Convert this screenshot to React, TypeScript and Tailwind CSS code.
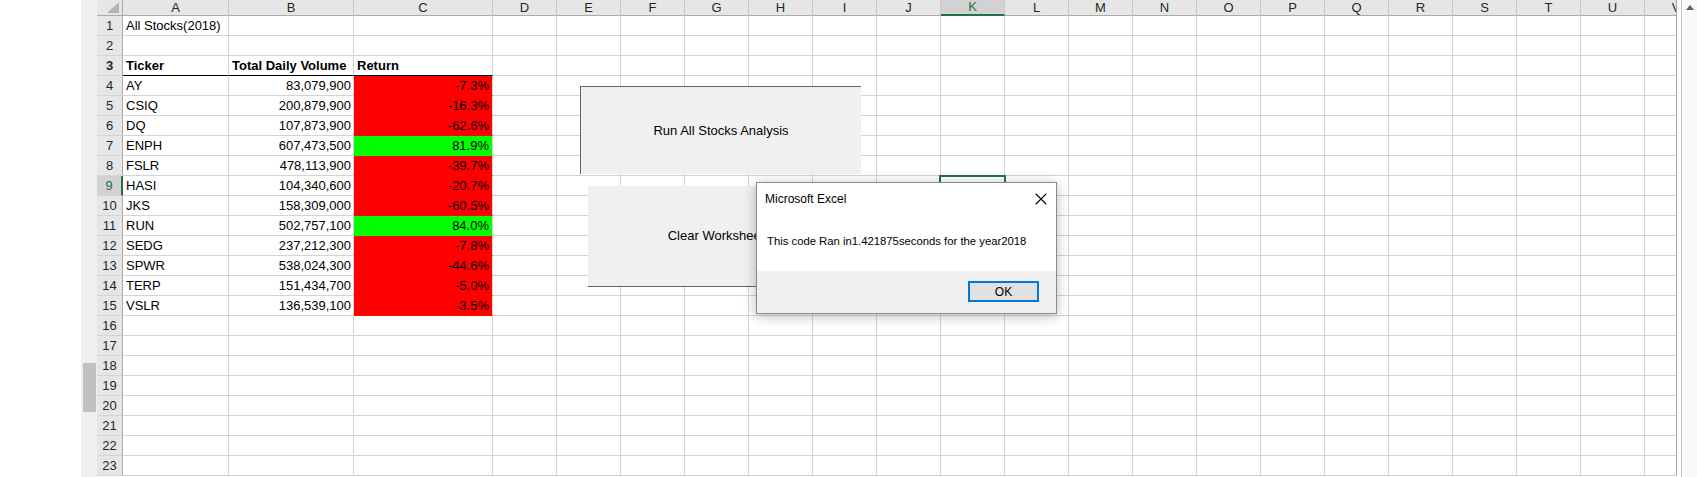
import { X } from 'lucide-react';

const letters = ['D', 'E', 'F', 'G', 'H', 'I', 'J', 'K', 'L', 'M', 'N', 'O', 'P', 'Q', 'R', 'S', 'T', 'U'];

const stocks = [
  { ticker: 'AY', volume: '83,079,900', ret: '-7.3%' },
  { ticker: 'CSIQ', volume: '200,879,900', ret: '-16.3%' },
  { ticker: 'DQ', volume: '107,873,900', ret: '-62.6%' },
  { ticker: 'ENPH', volume: '607,473,500', ret: '81.9%' },
  { ticker: 'FSLR', volume: '478,113,900', ret: '-39.7%' },
  { ticker: 'HASI', volume: '104,340,600', ret: '-20.7%' },
  { ticker: 'JKS', volume: '158,309,000', ret: '-60.5%' },
  { ticker: 'RUN', volume: '502,757,100', ret: '84.0%' },
  { ticker: 'SEDG', volume: '237,212,300', ret: '-7.8%' },
  { ticker: 'SPWR', volume: '538,024,300', ret: '-44.6%' },
  { ticker: 'TERP', volume: '151,434,700', ret: '-5.0%' },
  { ticker: 'VSLR', volume: '136,539,100', ret: '-3.5%' },
];

const cell = 'h-full shrink-0 border-r border-b border-[#d4d4d4] flex items-end whitespace-nowrap overflow-hidden';

function RowHeader({ n }: { n: number }) {
  const selected = n === 9;
  return (
    <div
      className={`w-[26px] h-full shrink-0 border-b border-[#d4d4d4] flex items-center justify-center ${
        selected ? 'bg-[#d2d2d2] text-[#217346] border-r-2 border-r-[#217346]' : 'bg-[#e6e6e6] text-[#262626] border-r border-r-[#ababab]'
      }`}
    >
      {n}
    </div>
  );
}

function EmptyCols() {
  return (
    <>
      {letters.map((l) => (
        <div key={l} className={`${cell} w-[64px]`} />
      ))}
      <div className="w-[32px] h-full shrink-0 border-b border-r border-[#d4d4d4] border-r-[#a6a6a6]" />
    </>
  );
}

export default function App() {
  return (
    <div className="relative w-[1697px] h-[477px] overflow-hidden bg-white flex font-['Liberation_Sans',Arial,sans-serif] text-[13px] text-black">
      {/* left margin + sheet scroll strip */}
      <div className="w-[81px] shrink-0 bg-white" />
      <div className="w-[16px] shrink-0 bg-[#f0f0f0] flex flex-col">
        <div className="h-[363px]" />
        <div className="ml-[2px] w-[13px] h-[49px] bg-[#c1c1c1]" />
      </div>

      {/* grid */}
      <div className="flex flex-col shrink-0">
        {/* column header */}
        <div className="flex h-4 text-[#262626]">
          <div className="w-[26px] h-full shrink-0 bg-[#e6e6e6] border-r border-b border-[#ababab] flex items-end justify-end pr-[3px] pb-[2px]">
            <svg width="12" height="11" viewBox="0 0 12 11">
              <polygon points="12,0 12,11 0,11" fill="#b4b4b4" />
            </svg>
          </div>
          {[
            ['A', 'w-[106px]'],
            ['B', 'w-[125px]'],
            ['C', 'w-[139px]'],
          ].map(([l, w]) => (
            <div key={l} className={`${w} h-full shrink-0 bg-[#e6e6e6] border-r border-r-[#c6c6c6] border-b border-b-[#ababab] flex items-center justify-center`}>
              {l}
            </div>
          ))}
          {letters.map((l) =>
            l === 'K' ? (
              <div key={l} className="w-[64px] h-full shrink-0 bg-[#d2d2d2] text-[#217346] border-r border-r-[#c6c6c6] border-b-2 border-b-[#217346] flex items-center justify-center">
                {l}
              </div>
            ) : (
              <div key={l} className="w-[64px] h-full shrink-0 bg-[#e6e6e6] border-r border-r-[#c6c6c6] border-b border-b-[#ababab] flex items-center justify-center">
                {l}
              </div>
            )
          )}
          <div className="w-[32px] h-full shrink-0 bg-[#e6e6e6] border-b border-[#ababab] border-r border-r-[#a6a6a6] overflow-hidden">
            <div className="w-[62px] h-full flex items-center justify-center">V</div>
          </div>
        </div>

        {/* row 1 */}
        <div className="flex h-5">
          <RowHeader n={1} />
          <div className={`${cell} w-[106px] pl-[3px]`}>All Stocks(2018)</div>
          <div className={`${cell} w-[125px]`} />
          <div className={`${cell} w-[139px]`} />
          <EmptyCols />
        </div>

        {/* row 2 */}
        <div className="flex h-5">
          <RowHeader n={2} />
          <div className={`${cell} w-[106px]`} />
          <div className={`${cell} w-[125px]`} />
          <div className={`${cell} w-[139px]`} />
          <EmptyCols />
        </div>

        {/* row 3 headings */}
        <div className="flex h-5 font-bold">
          <RowHeader n={3} />
          <div className={`${cell} w-[106px] pl-[3px] border-b-black`}>Ticker</div>
          <div className={`${cell} w-[125px] pl-[3px] border-b-black`}>Total Daily Volume</div>
          <div className={`${cell} w-[139px] pl-[3px] border-b-black`}>Return</div>
          <EmptyCols />
        </div>

        {stocks.map((s, i) => {
          const up = !s.ret.startsWith('-');
          return (
            <div key={s.ticker} className="flex h-5">
              <RowHeader n={i + 4} />
              <div className={`${cell} w-[106px] pl-[3px]`}>{s.ticker}</div>
              <div className={`${cell} w-[125px] justify-end pr-[2px]`}>{s.volume}</div>
              <div
                className={`${cell} w-[139px] justify-end pr-[3px] ${
                  up ? 'bg-[#00ff00] border-b-[#00ff00]' : 'bg-[#ff0000] border-b-[#ff0000]'
                }`}
              >
                {s.ret}
              </div>
              <EmptyCols />
            </div>
          );
        })}

        {Array.from({ length: 8 }, (_, i) => i + 16).map((n) => (
          <div key={n} className="flex h-5">
            <RowHeader n={n} />
            <div className={`${cell} w-[106px]`} />
            <div className={`${cell} w-[125px]`} />
            <div className={`${cell} w-[139px]`} />
            <EmptyCols />
          </div>
        ))}
      </div>

      {/* vertical scrollbar */}
      <div className="w-[20px] shrink-0 flex bg-white">
        <div className="w-[4px]" />
        <div className="flex-1 border-l border-[#c8c8c8] bg-[#fafafa] flex flex-col">
          <div className="h-[15px] flex items-center justify-center">
            <svg width="8" height="5" viewBox="0 0 8 5">
              <polygon points="4,0 8,5 0,5" fill="#606060" />
            </svg>
          </div>
        </div>
      </div>

      {/* selected cell K9 */}
      <div className="absolute left-[939px] top-[175px] w-[67px] h-[22px] border-2 border-[#217346]" />

      {/* form buttons */}
      <div className="absolute left-[580px] top-[86px] w-[281px] h-[88px] bg-[#f0f0f0] border-t border-l border-[#646464] flex items-center justify-center">
        Run All Stocks Analysis
      </div>
      <div className="absolute left-[588px] top-[186px] w-[256px] h-[101px] bg-[#f0f0f0] border-b border-[#646464] flex items-center justify-center">
        Clear Worksheet
      </div>

      {/* message box */}
      <div className="absolute left-[756px] top-[182px] w-[301px] h-[132px] border border-[#8a8a8a] bg-white shadow-[0_2px_12px_rgba(0,0,0,0.28)] flex flex-col text-[12px]">
        <div className="h-[30px] shrink-0 flex items-center justify-between pl-[8px] pr-[5px] pt-[1px]">
          <span>Microsoft Excel</span>
          <X size={20} strokeWidth={1.3} className="text-black" />
        </div>
        <div className="flex-1 flex items-center pl-[10px] pb-[2px] text-[11.3px]">
          This code Ran in1.421875seconds for the year2018
        </div>
        <div className="h-[42px] shrink-0 bg-[#f0f0f0] flex justify-end items-start pt-[10px] pr-[17px]">
          <div className="w-[71px] h-[21px] border-2 border-[#0078d7] bg-[#e1e1e1] flex items-center justify-center">OK</div>
        </div>
      </div>
    </div>
  );
}
